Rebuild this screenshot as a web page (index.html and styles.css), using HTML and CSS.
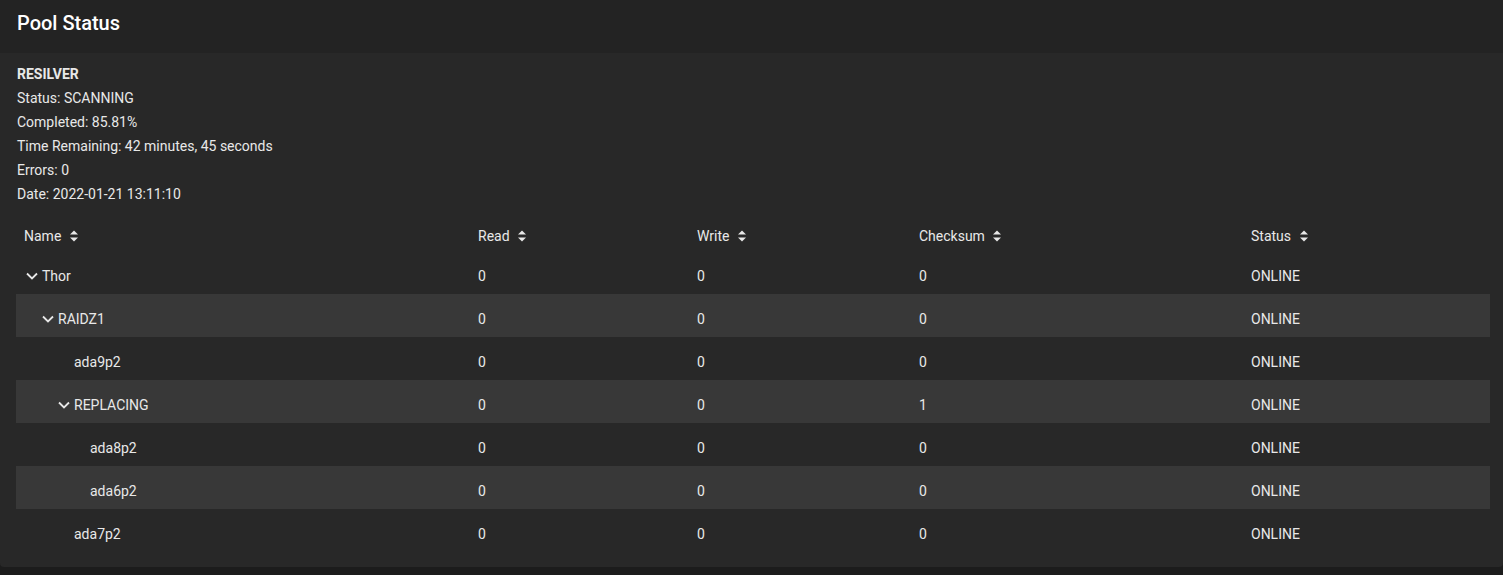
FILE: index.html
```html
<!DOCTYPE html>
<html lang="en">
<head>
	<meta charset="UTF-8">
	<title>Pool Status</title>
	<link rel="stylesheet" href="styles.css">
</head>
<body>
<div class="card">
	<div class="card-head">Pool Status</div>
	<div class="card-body">
		<div class="scan">
			<p class="scan-title">RESILVER</p>
			<p>Status: SCANNING</p>
			<p>Completed: 85.81%</p>
			<p>Time Remaining: 42 minutes, 45 seconds</p>
			<p>Errors: 0</p>
			<p>Date: 2022-01-21 13:11:10</p>
		</div>
		<table class="tree">
			<colgroup>
				<col class="c-name"><col class="c-read"><col class="c-write"><col class="c-sum"><col class="c-status">
			</colgroup>
			<thead>
				<tr>
					<th>Name <svg class="sort" viewBox="0 0 10 14"><path d="M1 5.5h8L5 1.5z M1 8.5h8L5 12.5z"/></svg></th>
					<th>Read <svg class="sort" viewBox="0 0 10 14"><path d="M1 5.5h8L5 1.5z M1 8.5h8L5 12.5z"/></svg></th>
					<th>Write <svg class="sort" viewBox="0 0 10 14"><path d="M1 5.5h8L5 1.5z M1 8.5h8L5 12.5z"/></svg></th>
					<th>Checksum <svg class="sort" viewBox="0 0 10 14"><path d="M1 5.5h8L5 1.5z M1 8.5h8L5 12.5z"/></svg></th>
					<th>Status <svg class="sort" viewBox="0 0 10 14"><path d="M1 5.5h8L5 1.5z M1 8.5h8L5 12.5z"/></svg></th>
				</tr>
			</thead>
			<tbody>
				<tr>
					<td class="lv0"><span class="tog"><svg viewBox="0 0 12 12"><path d="M1 3.5l5 5 5-5"/></svg></span>Thor</td>
					<td>0</td><td>0</td><td>0</td><td>ONLINE</td>
				</tr>
				<tr>
					<td class="lv1"><span class="tog"><svg viewBox="0 0 12 12"><path d="M1 3.5l5 5 5-5"/></svg></span>RAIDZ1</td>
					<td>0</td><td>0</td><td>0</td><td>ONLINE</td>
				</tr>
				<tr>
					<td class="lv2 leaf">ada9p2</td>
					<td>0</td><td>0</td><td>0</td><td>ONLINE</td>
				</tr>
				<tr>
					<td class="lv2"><span class="tog"><svg viewBox="0 0 12 12"><path d="M1 3.5l5 5 5-5"/></svg></span>REPLACING</td>
					<td>0</td><td>0</td><td>1</td><td>ONLINE</td>
				</tr>
				<tr>
					<td class="lv3 leaf">ada8p2</td>
					<td>0</td><td>0</td><td>0</td><td>ONLINE</td>
				</tr>
				<tr>
					<td class="lv3 leaf">ada6p2</td>
					<td>0</td><td>0</td><td>0</td><td>ONLINE</td>
				</tr>
				<tr>
					<td class="lv2 leaf">ada7p2</td>
					<td>0</td><td>0</td><td>0</td><td>ONLINE</td>
				</tr>
			</tbody>
		</table>
	</div>
</div>
</body>
</html>
```

FILE: styles.css
```css
*{padding:0;margin:0;box-sizing:border-box;}
body{
	background:#1c1c1c;
	font-family:Roboto,"Liberation Sans",sans-serif;
	color:#e8e8e8;
	width:1503px;
	overflow:hidden;
}
/*卡片*/
.card{
	width:1503px;
	height:567px;
	background:#282828;
	border-radius:0 0 4px 4px;
	overflow:hidden;
}
.card-head{
	height:53px;
	background:#232323;
	padding:11px 17px 0;
	font-size:20px;
	font-weight:500;
	color:#fff;
	line-height:24px;
}
.card-body{
	padding:9px 13px 0 16px;
}
.scan{
	padding-left:1px;
	font-size:14px;
	line-height:24px;
	height:148px;
}
.scan-title{
	font-weight:700;
}
/*表格*/
.tree{
	width:1474px;
	border-collapse:collapse;
	table-layout:fixed;
	font-size:14px;
}
.c-name{width:454px;}
.c-read{width:219px;}
.c-write{width:222px;}
.c-sum{width:332px;}
.c-status{width:247px;}
.tree th{
	height:41px;
	text-align:left;
	font-weight:400;
	padding:10px 8px 0;
	vertical-align:middle;
}
.sort{
	width:10px;
	height:14px;
	vertical-align:-2px;
	margin-left:4px;
	fill:#e8e8e8;
}
.tree td{
	height:43px;
	padding:6px 8px 0;
	vertical-align:middle;
	white-space:nowrap;
}
.tree tbody tr:nth-child(even){
	background:#383838;
}
.tog{
	display:inline-block;
	width:18px;
	height:12px;
	vertical-align:-1px;
}
.tog svg{
	width:12px;
	height:12px;
	margin-left:2px;
	fill:none;
	stroke:#e8e8e8;
	stroke-width:1.8;
}
.tree td.lv0{padding-left:8px;}
.tree td.lv1{padding-left:24px;}
.tree td.lv2{padding-left:40px;}
.tree td.lv3{padding-left:56px;}
.tree td.leaf{text-indent:18px;}
```
